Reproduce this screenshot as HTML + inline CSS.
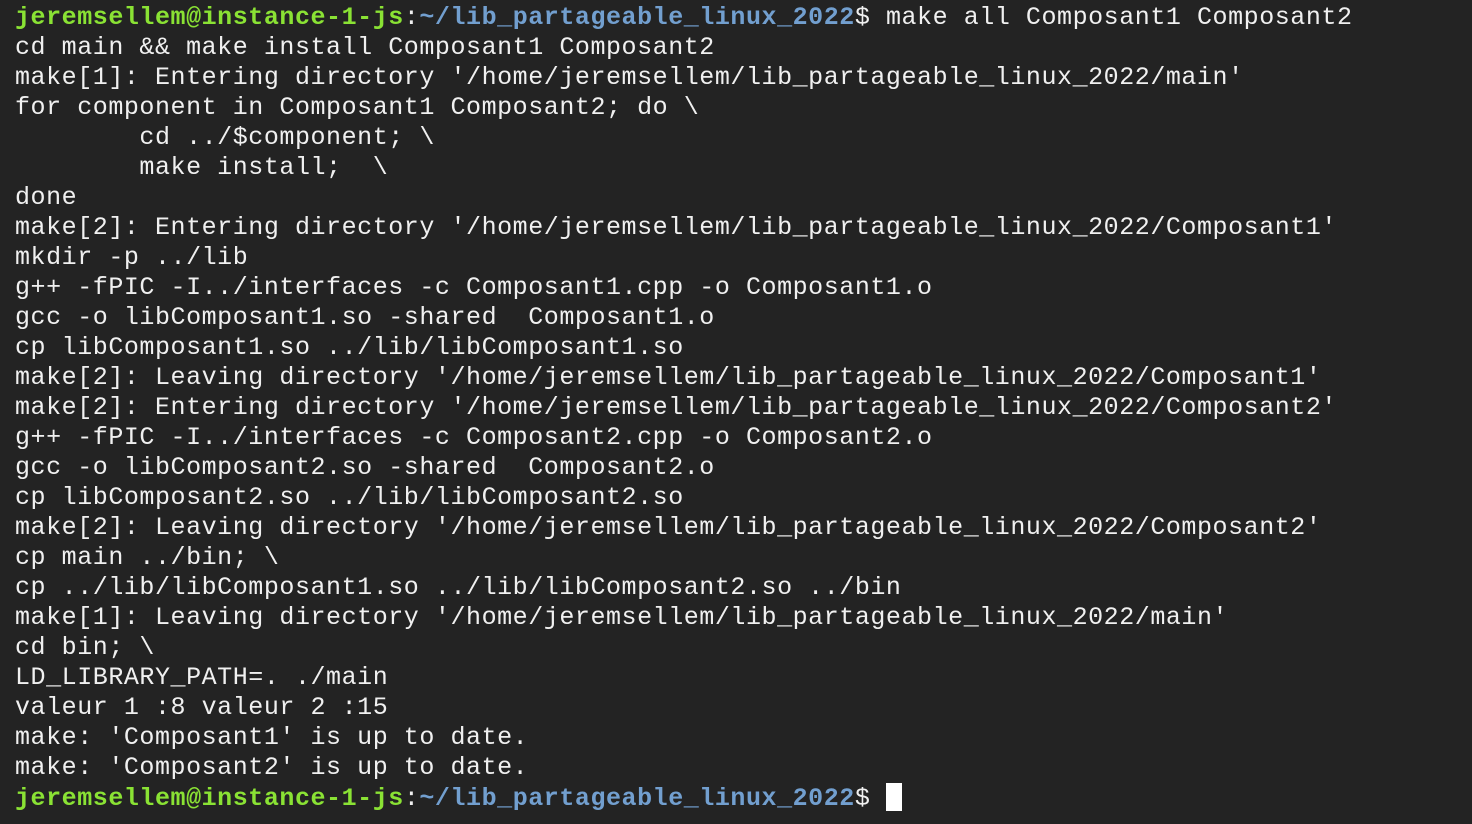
<!DOCTYPE html><html><head><style>
html,body{margin:0;width:1472px;height:824px;background:#232323;overflow:hidden}
pre{margin:0;position:absolute;left:15px;top:3px;font-family:"Liberation Mono","Courier New",monospace;font-size:25px;letter-spacing:0.55px;line-height:30px;color:#f0f0f0;white-space:pre}
.g{color:#8ae234;font-weight:bold}.b{color:#729fcf;font-weight:bold}
.c{display:inline-block;width:16px;height:28px;background:#fff;vertical-align:-6px}
</style></head><body><pre><span class="g">jeremsellem@instance-1-js</span>:<span class="b">~/lib_partageable_linux_2022</span>$ make all Composant1 Composant2
cd main &amp;&amp; make install Composant1 Composant2
make[1]: Entering directory '/home/jeremsellem/lib_partageable_linux_2022/main'
for component in Composant1 Composant2; do \
        cd ../$component; \
        make install;  \
done
make[2]: Entering directory '/home/jeremsellem/lib_partageable_linux_2022/Composant1'
mkdir -p ../lib
g++ -fPIC -I../interfaces -c Composant1.cpp -o Composant1.o
gcc -o libComposant1.so -shared  Composant1.o
cp libComposant1.so ../lib/libComposant1.so
make[2]: Leaving directory '/home/jeremsellem/lib_partageable_linux_2022/Composant1'
make[2]: Entering directory '/home/jeremsellem/lib_partageable_linux_2022/Composant2'
g++ -fPIC -I../interfaces -c Composant2.cpp -o Composant2.o
gcc -o libComposant2.so -shared  Composant2.o
cp libComposant2.so ../lib/libComposant2.so
make[2]: Leaving directory '/home/jeremsellem/lib_partageable_linux_2022/Composant2'
cp main ../bin; \
cp ../lib/libComposant1.so ../lib/libComposant2.so ../bin
make[1]: Leaving directory '/home/jeremsellem/lib_partageable_linux_2022/main'
cd bin; \
LD_LIBRARY_PATH=. ./main
valeur 1 :8 valeur 2 :15
make: 'Composant1' is up to date.
make: 'Composant2' is up to date.
<span class="g">jeremsellem@instance-1-js</span>:<span class="b">~/lib_partageable_linux_2022</span>$ <span class="c"></span></pre></body></html>
